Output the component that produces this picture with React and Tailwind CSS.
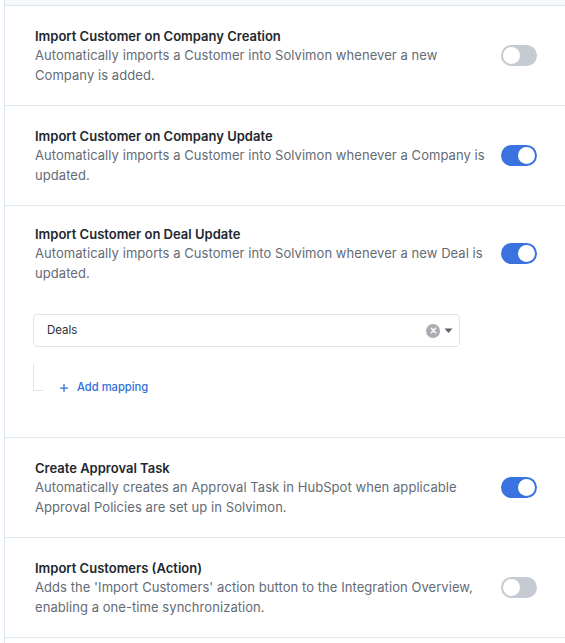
import { Plus } from 'lucide-react';

const font = { fontFamily: 'Inter, "Noto Sans", sans-serif' };

function Toggle({ on }) {
    return (
        <div
            className={`relative w-[36px] h-[21px] rounded-full shrink-0 ${on ? 'bg-[#3a72df]' : 'bg-[#c6cbd3]'}`}
        >
            <div
                className={`absolute top-[2px] w-[17px] h-[17px] rounded-full bg-white ${on ? 'left-[17px]' : 'left-[2px]'}`}
            />
        </div>
    );
}

function SettingHeader({ title, description, on }) {
    return (
        <div className="flex items-center gap-2">
            <div className="flex-1 min-w-0 max-w-[458px]">
                <div className="text-[13px] leading-[20px] font-semibold text-[#22272e]">{title}</div>
                <div className="text-[13px] leading-[19.5px] tracking-[0.06px] text-[#646b75]">{description}</div>
            </div>
            <div className="ml-auto">
                <Toggle on={on} />
            </div>
        </div>
    );
}

function DealSelect() {
    return (
        <div className="mt-[31px] w-[427px] h-[33px] flex items-center border border-[#dfe5ee] rounded-[4px] bg-white pl-[13px] pr-[6px]">
            <span className="flex-1 text-[11.5px] text-[#2a2f36]">Deals</span>
            <span className="w-[14px] h-[14px] rounded-full bg-[#a9acb1] flex items-center justify-center">
                <svg width="7" height="7" viewBox="0 0 8 8">
                    <path d="M1.5 1.5l5 5M6.5 1.5l-5 5" stroke="#fff" strokeWidth="1.6" strokeLinecap="round" />
                </svg>
            </span>
            <svg className="ml-[4px]" width="9" height="6" viewBox="0 0 9 6">
                <path d="M0.5 0.5h8L4.5 5z" fill="#5d6168" />
            </svg>
        </div>
    );
}

function AddMapping() {
    return (
        <div className="mt-[17px] flex items-end">
            {/* tree connector */}
            <div className="w-[10px] h-[27px] border-l border-b border-[#dfe5ee]" />
            <button className="ml-[15px] flex items-center gap-[7px] text-[11.2px] font-medium text-[#2f6fda] translate-y-[5px]">
                <Plus className="w-[12px] h-[12px]" strokeWidth={2.5} />
                Add mapping
            </button>
        </div>
    );
}

const rows = [
    {
        title: 'Import Customer on Company Creation',
        description: 'Automatically imports a Customer into Solvimon whenever a new Company is added.',
        on: false,
    },
    {
        title: 'Import Customer on Company Update',
        description: 'Automatically imports a Customer into Solvimon whenever a Company is updated.',
        on: true,
    },
    {
        title: 'Import Customer on Deal Update',
        description: 'Automatically imports a Customer into Solvimon whenever a new Deal is updated.',
        on: true,
        mapping: true,
    },
    {
        title: 'Create Approval Task',
        description: 'Automatically creates an Approval Task in HubSpot when applicable Approval Policies are set up in Solvimon.',
        on: true,
    },
    {
        title: 'Import Customers (Action)',
        description: "Adds the 'Import Customers' action button to the Integration Overview, enabling a one-time synchronization.",
        on: false,
    },
];

export default function App() {
    return (
        <div className="min-h-[643px] bg-white" style={font}>
            <div className="ml-[4px] min-h-[643px] border-l border-[#dde6f2]">
                <div className="h-[5px] bg-[#f7f8f9] border-b border-[#dde6f2] box-content" />
                {rows.map((row) => (
                    <div
                        key={row.title}
                        className={`border-b border-[#e0e7f1] pl-[30px] pr-[28px] ${row.mapping ? 'pt-[18px] pb-[46px]' : 'py-[20px]'}`}
                    >
                        <SettingHeader title={row.title} description={row.description} on={row.on} />
                        {row.mapping && (
                            <div className="-ml-[2px]">
                                <DealSelect />
                                <AddMapping />
                            </div>
                        )}
                    </div>
                ))}
            </div>
        </div>
    );
}
